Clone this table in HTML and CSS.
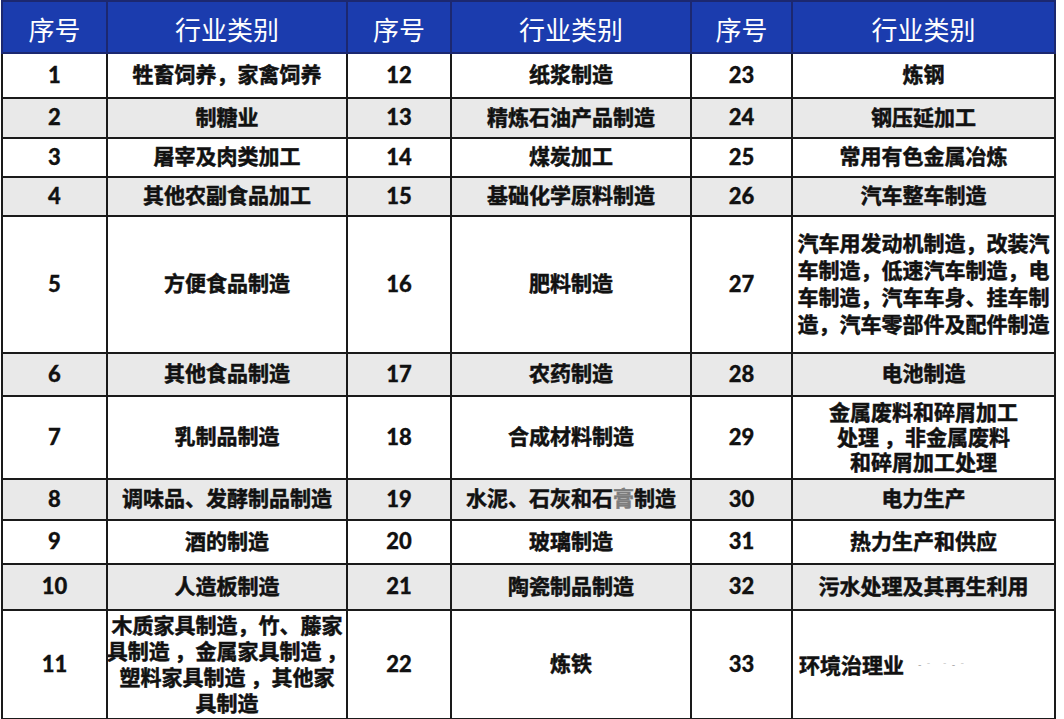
FILE: index.html
```html
<!DOCTYPE html>
<html lang="zh-CN">
<head>
<meta charset="utf-8">
<title>行业类别</title>
<link rel="stylesheet" href="styles.css">
</head>
<body>
<table class="grid">
  <colgroup>
    <col class="c-no1"><col class="c-name1"><col class="c-no2"><col class="c-name2"><col class="c-no3"><col class="c-name3">
  </colgroup>
  <thead>
    <tr class="h-head">
      <th>序号</th><th>行业类别</th><th>序号</th><th>行业类别</th><th>序号</th><th>行业类别</th>
    </tr>
  </thead>
  <tbody>
    <tr class="h45">
      <td class="num">1</td><td>牲畜饲养，家禽饲养</td>
      <td class="num">12</td><td>纸浆制造</td>
      <td class="num">23</td><td>炼钢</td>
    </tr>
    <tr class="h40 alt">
      <td class="num">2</td><td>制糖业</td>
      <td class="num">13</td><td>精炼石油产品制造</td>
      <td class="num">24</td><td>钢压延加工</td>
    </tr>
    <tr class="h39">
      <td class="num">3</td><td>屠宰及肉类加工</td>
      <td class="num">14</td><td>煤炭加工</td>
      <td class="num">25</td><td>常用有色金属冶炼</td>
    </tr>
    <tr class="h39 alt">
      <td class="num">4</td><td>其他农副食品加工</td>
      <td class="num">15</td><td>基础化学原料制造</td>
      <td class="num">26</td><td>汽车整车制造</td>
    </tr>
    <tr class="h137">
      <td class="num">5</td><td>方便食品制造</td>
      <td class="num">16</td><td>肥料制造</td>
      <td class="num">27</td>
      <td><div class="lines lh27"><span>汽车用发动机制造，改装汽</span><span>车制造，低速汽车制造，电</span><span>车制造，汽车车身、挂车制</span><span>造，汽车零部件及配件制造</span></div></td>
    </tr>
    <tr class="h43 alt">
      <td class="num">6</td><td>其他食品制造</td>
      <td class="num">17</td><td>农药制造</td>
      <td class="num">28</td><td>电池制造</td>
    </tr>
    <tr class="h83">
      <td class="num">7</td><td>乳制品制造</td>
      <td class="num">18</td><td>合成材料制造</td>
      <td class="num">29</td>
      <td><div class="lines lh25"><span>金属废料和碎屑加工</span><span>处理 ，非金属废料</span><span>和碎屑加工处理</span></div></td>
    </tr>
    <tr class="h41 alt">
      <td class="num">8</td><td>调味品、发酵制品制造</td>
      <td class="num">19</td><td>水泥、石灰和石<span class="blur">膏</span>制造</td>
      <td class="num">30</td><td>电力生产</td>
    </tr>
    <tr class="h44">
      <td class="num">9</td><td>酒的制造</td>
      <td class="num">20</td><td>玻璃制造</td>
      <td class="num">31</td><td>热力生产和供应</td>
    </tr>
    <tr class="h46 alt">
      <td class="num">10</td><td>人造板制造</td>
      <td class="num">21</td><td>陶瓷制品制造</td>
      <td class="num">32</td><td>污水处理及其再生利用</td>
    </tr>
    <tr class="h108">
      <td class="num">11</td>
      <td><div class="lines lh26"><span>木质家具制造，竹、藤家</span><span>具制造 ，金属家具制造 ，</span><span>塑料家具制造 ，其他家</span><span>具制造</span></div></td>
      <td class="num">22</td><td>炼铁</td>
      <td class="num">33</td>
      <td class="left"><span class="txt">环境治理业</span><span class="noise">-‐ ‐-‐</span></td>
    </tr>
  </tbody>
</table>
</body>
</html>
```
FILE: styles.css
```css
html, body {
  margin: 0;
  padding: 0;
  background: #ffffff;
}

.grid {
  border-collapse: collapse;
  table-layout: fixed;
  width: 1054px;
  margin: 0 0 0 1px;
  font-family: "Noto Sans CJK SC", "Noto Sans", sans-serif;
  color: #111111;
}

.c-no1 { width: 105px; }
.c-name1 { width: 240px; }
.c-no2 { width: 104px; }
.c-name2 { width: 240px; }
.c-no3 { width: 101px; }
.c-name3 { width: 263px; }

.grid th {
  background: #1b3cae;
  color: #ffffff;
  font-weight: 400;
  font-size: 26px;
  height: 46px;
  padding: 4px 0 0 0;
  border: 2px solid #1c2870;
  text-align: center;
  vertical-align: middle;
  line-height: 1;
}

.grid td {
  border: 2px solid #1a1a1a;
  padding: 0 0 3px 0;
  text-align: center;
  vertical-align: middle;
  font-size: 21px;
  font-weight: 700;
  line-height: 1.2;
  white-space: nowrap;
  overflow: hidden;
  -webkit-text-stroke: 0.5px #111111;
}

.grid td.num {
  font-family: "Lato", "Open Sans", sans-serif;
  font-weight: 900;
  font-size: 22px;
  padding-bottom: 1px;
  -webkit-text-stroke: 0.3px #111111;
}

.grid td.left {
  text-align: left;
  padding-left: 6px;
}

.alt td {
  background: #e9e9e9;
}

.h45 td { height: 40px; }
.h40 td { height: 35px; }
.h39 td { height: 34px; }
.h137 td { height: 132px; }
.h43 td { height: 38px; }
.h83 td { height: 78px; }
.h41 td { height: 36px; }
.h44 td { height: 39px; }
.h46 td { height: 41px; }
.h108 td { height: 103px; }

.lines {
  display: flex;
  flex-direction: column;
  align-items: center;
  overflow: hidden;
}

.lines span {
  white-space: pre;
}

.lh27 { line-height: 27px; }
.lh26 { line-height: 26px; }
.lh25 { line-height: 25px; }

.blur {
  color: #7d7d7d;
  -webkit-text-stroke: 0.5px #7d7d7d;
}

.txt {
  vertical-align: middle;
}

.noise {
  font-size: 10px;
  font-weight: 400;
  color: #9a9a9a;
  margin-left: 14px;
  vertical-align: middle;
  letter-spacing: 2px;
  -webkit-text-stroke: 0;
}
```
